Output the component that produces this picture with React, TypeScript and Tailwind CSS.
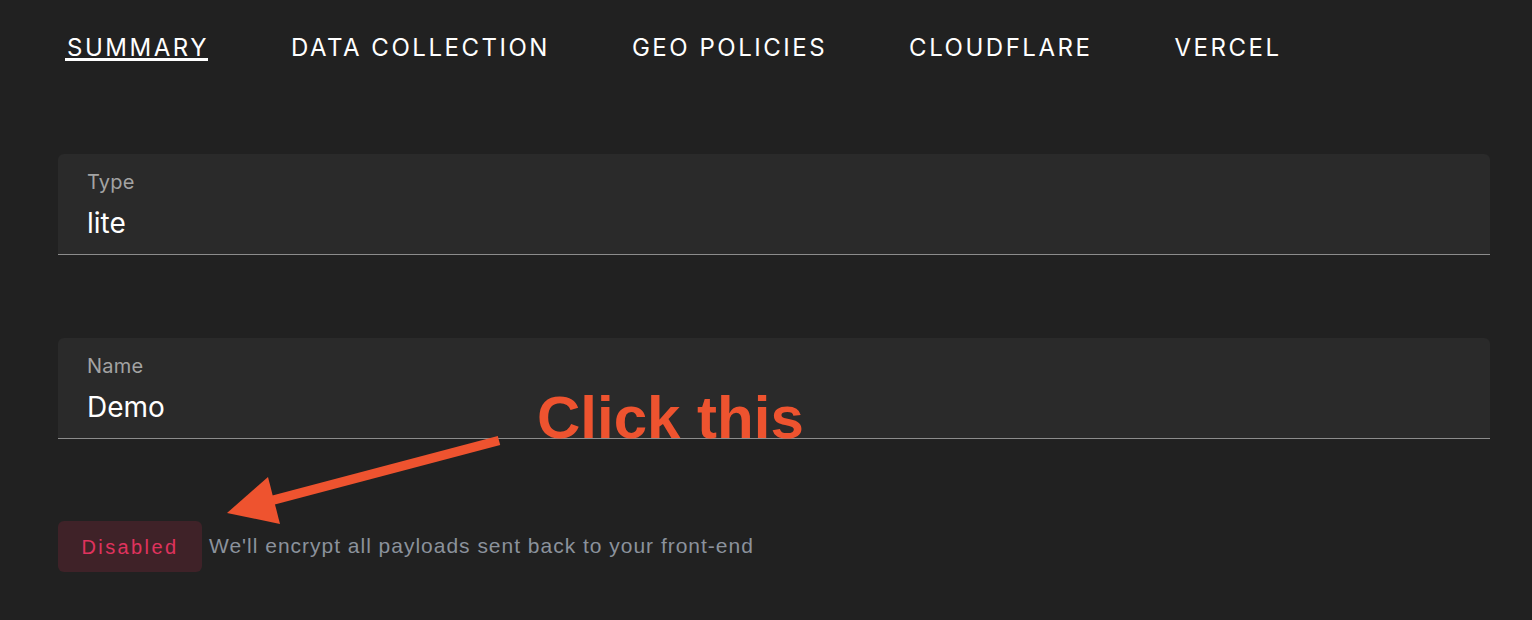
import React from 'react';

const tabs = ['SUMMARY', 'DATA COLLECTION', 'GEO POLICIES', 'CLOUDFLARE', 'VERCEL'];

const Field = ({ label, value }: { label: string; value: string }) => (
    <div className="bg-[#2a2a2a] rounded-t-[6px] border-b border-[#8c8c8c] pl-[29px] pt-[16px] pb-[14px]">
        <div className="text-[20px] leading-[24px] tracking-[0.01em] text-[#a3a3a3]">{label}</div>
        <div className="mt-[12px] text-[28px] leading-[34px] text-white">{value}</div>
    </div>
);

const Annotation = () => (
    <div className="absolute inset-0 pointer-events-none">
        <div
            className="absolute left-[537px] top-[388px] text-[60px] leading-none font-bold text-[#ee532f]"
            style={{ fontFamily: '"Liberation Sans", Arial, sans-serif' }}
        >
            Click this
        </div>
        <svg className="absolute left-0 top-0" width="1532" height="620" viewBox="0 0 1532 620">
            <line x1="499" y1="440.5" x2="266" y2="502" stroke="#ee532f" strokeWidth="9.5" />
            <polygon points="227,513 268,477 280,524" fill="#ee532f" />
        </svg>
    </div>
);

export default function App() {
    return (
        <div
            className="relative w-[1532px] h-[620px] bg-[#212121] overflow-hidden"
            style={{ fontFamily: 'Inter, "Noto Sans", sans-serif' }}
        >
            <div className="flex pl-[67px] pt-[33px] gap-[82px]">
                {tabs.map((t, i) => (
                    <span key={t} className="relative text-[24px] leading-[29px] tracking-[0.105em] text-white">
                        {t}
                        {i === 0 && <span className="absolute left-[-2px] right-[1px] top-[25px] h-[3px] bg-white" />}
                    </span>
                ))}
            </div>

            <div className="pl-[58px] pr-[42px] mt-[92px] flex flex-col gap-[83px]">
                <Field label="Type" value="lite" />
                <Field label="Name" value="Demo" />
            </div>

            <div
                className="pl-[58px] mt-[82px] flex items-center gap-[7px]"
                style={{ fontFamily: '"Liberation Sans", Arial, sans-serif' }}
            >
                <button className="h-[51px] w-[144px] rounded-[6px] bg-[#3f2228] text-[20px] tracking-[0.12em] text-[#e0335e]">
                    Disabled
                </button>
                <span className="text-[21px] leading-[24px] tracking-[0.047em] text-[#8b929c] -mt-[2px]">
                    We'll encrypt all payloads sent back to your front-end
                </span>
            </div>

            <Annotation />
        </div>
    );
}
